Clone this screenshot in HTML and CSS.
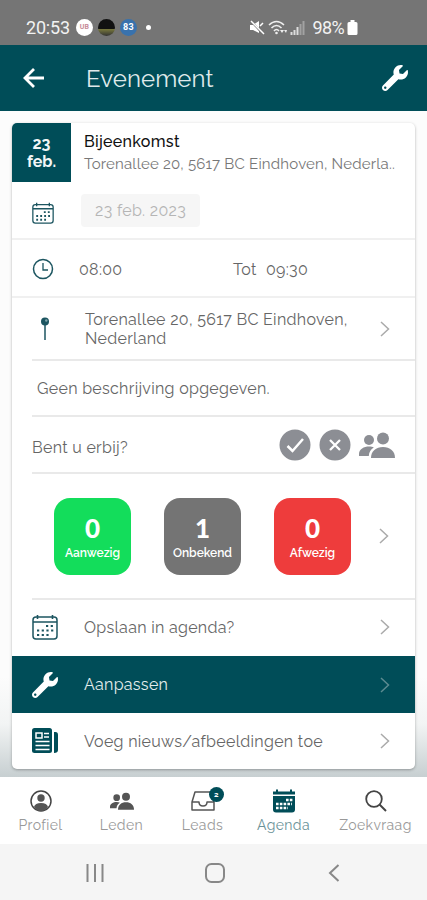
FILE: index.html
```
<!DOCTYPE html>
<html lang="nl">
<head>
    <meta charset="UTF-8">
    <meta name="viewport" content="width=device-width, initial-scale=1.0">
    <title>Evenement</title>
    <link rel="stylesheet" href="styles.css">
</head>
<body>
    <svg class="sprite">
        <symbol id="wrench" viewBox="0 0 512 512">
            <path fill="currentColor" d="M507.73 109.1c-2.24-9.03-13.54-12.09-20.12-5.51l-74.36 74.36-67.88-11.31-11.31-67.88 74.36-74.36c6.62-6.62 3.43-17.9-5.66-20.16-47.38-11.74-99.55.91-136.58 37.93-39.64 39.64-50.55 97.1-34.05 147.2L18.74 402.76c-24.99 24.99-24.99 65.51 0 90.5 24.99 24.99 65.51 24.99 90.5 0l213.21-213.21c50.12 16.71 107.47 5.68 147.37-34.22 37.07-37.07 49.7-89.32 37.91-136.73zM64 472c-13.25 0-24-10.75-24-24 0-13.26 10.75-24 24-24s24 10.74 24 24c0 13.25-10.75 24-24 24z"/>
        </symbol>
        <symbol id="calendar" viewBox="0 0 26 26">
            <rect x="1" y="3" width="24" height="22" rx="3" fill="none" stroke="currentColor" stroke-width="1.5"/>
            <path d="M1 8h24M5.500 1v4M20.500 1v4" fill="none" stroke="currentColor" stroke-width="1.6"/>
            <path d="M14 12h8M5 16.500h17M5 21h12" fill="none" stroke="currentColor" stroke-width="2.200" stroke-dasharray="2.200 2.500"/>
        </symbol>
        <symbol id="people" viewBox="0 0 36 26">
            <circle cx="10" cy="8" r="5"/>
            <circle cx="24" cy="6.500" r="6"/>
            <path d="M0 24v-2c0-5 5-7.500 10-7.500 2 0 3.500.4 4.800 1-3 2-4.800 4.500-5 8.500z"/>
            <path d="M12 26c0-7 5-11 12-11s12 4 12 11z"/>
        </symbol>
        <symbol id="chevron" viewBox="0 0 10 16">
            <path d="M1 1l7.500 7L1 15" fill="none" stroke="currentColor" stroke-width="1.500"/>
        </symbol>
    </svg>

    <div class="status-bar">
        <span class="clock">20:53</span>
        <span class="app app-white">UB</span>
        <span class="app app-black"></span>
        <span class="app app-blue">83</span>
        <span class="dot"></span>
        <div class="system">
            <svg width="16" height="15" viewBox="0 0 16 15"><path d="M1 5h3l6-4v12L4 10H1z" fill="#fff"/><path d="M1 0l13 14" stroke="#757575" stroke-width="2"/><path d="M2 1l13 13M11 6l3-3" stroke="#fff" stroke-width="1.500"/></svg>
            <svg width="19" height="15" viewBox="0 0 19 15"><path d="M1 5q7.500-7 15 0M3.500 8q5-5 10 0M6 11q2.500-3 5 0" fill="none" stroke="#eee" stroke-width="1.600"/><path d="M12 10l2 3 2-3zM18 13l-2-3h3z" fill="#eee"/><circle cx="8.500" cy="13" r="1.300" fill="#eee"/></svg>
            <svg width="15" height="14" viewBox="0 0 15 14"><path d="M1.500 14v-3M4.500 14V9M7.500 14V6" stroke="#ddd" stroke-width="2"/><path d="M10.500 14V3M13.500 14V0" stroke="#a2a2a2" stroke-width="2"/></svg>
            <span class="percent">98%</span>
            <svg width="11" height="15" viewBox="0 0 11 15"><path d="M3.500 0h4v2H9q1.500 0 1.500 1.500v10Q10.500 15 9 15H2Q.5 15 .5 13.500v-10Q.5 2 2 2h1.500z" fill="#fff"/></svg>
        </div>
    </div>

    <header>
        <svg class="back" width="22" height="22" viewBox="0 0 22 22"><path d="M21 11H2M11 2l-9 9 9 9" fill="none" stroke="#fff" stroke-width="2.800"/></svg>
        <h1>Evenement</h1>
        <svg class="edit" width="26" height="26"><use href="#wrench"/></svg>
    </header>

    <main>
        <div class="card">
            <div class="row title-row">
                <div class="badge">23<br>feb.</div>
                <div class="title">
                    <h2>Bijeenkomst</h2>
                    <p>Torenallee 20, 5617 BC Eindhoven, Nederla..</p>
                </div>
            </div>
            <div class="row date-row">
                <svg class="icon" width="22" height="22"><use href="#calendar"/></svg>
                <span class="date">23 feb. 2023</span>
            </div>
            <div class="row time-row">
                <svg class="icon" width="22" height="22" viewBox="0 0 22 22"><circle cx="11" cy="11" r="9.500" fill="none" stroke="currentColor" stroke-width="1.500"/><path d="M11 5v7h5" fill="none" stroke="currentColor" stroke-width="1.300"/></svg>
                <span class="from">08:00</span>
                <span class="until">Tot</span>
                <span>09:30</span>
            </div>
            <div class="row address-row">
                <svg class="icon pin" width="10" height="24" viewBox="0 0 10 24"><circle cx="5" cy="4.500" r="4"/><path d="M5 8v15" stroke="currentColor" stroke-width="1.500"/><circle cx="6.300" cy="3.500" r="1.200" fill="#7fa5ab"/></svg>
                <span class="address">Torenallee 20, 5617 BC Eindhoven,<br>Nederland</span>
                <svg class="chevron"><use href="#chevron"/></svg>
            </div>
            <div class="row inset description">Geen beschrijving opgegeven.</div>
            <div class="row inset attend">
                <span>Bent u erbij?</span>
                <svg width="32" height="32" viewBox="0 0 32 32"><circle cx="16" cy="16" r="15.500"/><path d="M8.500 17l5 5L24 10" fill="none" stroke="#fff" stroke-width="2.500"/></svg>
                <svg width="32" height="32" viewBox="0 0 32 32"><circle cx="16" cy="16" r="15.500"/><path d="M11 11l10 10M21 11L11 21" stroke="#fff" stroke-width="2.300"/></svg>
                <svg width="36" height="26"><use href="#people"/></svg>
            </div>
            <div class="row inset counts">
                <div class="count green"><b>0</b>Aanwezig</div>
                <div class="count gray"><b>1</b>Onbekend</div>
                <div class="count red"><b>0</b>Afwezig</div>
                <svg class="chevron"><use href="#chevron"/></svg>
            </div>
            <div class="row link save">
                <svg class="icon" width="26" height="26"><use href="#calendar"/></svg>
                <span>Opslaan in agenda?</span>
                <svg class="chevron"><use href="#chevron"/></svg>
            </div>
            <div class="row link active">
                <svg class="icon" width="26" height="26"><use href="#wrench"/></svg>
                <span>Aanpassen</span>
                <svg class="chevron"><use href="#chevron"/></svg>
            </div>
            <div class="row link news">
                <svg class="icon" width="26" height="26" viewBox="0 0 26 26"><rect width="20" height="25" rx="2.500"/><path d="M22 4h1.500Q26 4 26 7v15q0 3-4 3z"/><path d="M4 5h6v5H4zM12 5.500h5M12 9h5M3.500 13.500h14M3.500 17.500h14M3.500 21.500h14" fill="none" stroke="#fff" stroke-width="1.500"/></svg>
                <span>Voeg nieuws/afbeeldingen toe</span>
                <svg class="chevron"><use href="#chevron"/></svg>
            </div>
        </div>
    </main>

    <nav>
        <a class="tab">
            <svg width="22" height="22" viewBox="0 0 22 22"><circle cx="11" cy="11" r="10" fill="none" stroke="#444" stroke-width="1.500"/><circle cx="11" cy="8" r="3.700"/><path d="M4 17q1-4 7-4t7 4q-3 4-7 4t-7-4z"/></svg>
            <span>Profiel</span>
        </a>
        <a class="tab">
            <svg width="24" height="18"><use href="#people"/></svg>
            <span>Leden</span>
        </a>
        <a class="tab">
            <svg width="24" height="20" viewBox="0 0 24 20"><path d="M1 11L4 1h16l3 10v8H1zM1 11h7q0 4 4 4t4-4h7" fill="none" stroke="#555" stroke-width="1.500" stroke-linejoin="round"/></svg>
            <span>Leads</span>
            <i>2</i>
        </a>
        <a class="tab current">
            <svg width="24" height="23" viewBox="0 0 24 23"><path d="M1 2h3V0h2v2h12V0h2v2h3v3H1zM1 6.500h22V20q0 3-3 3H4q-3 0-3-3z"/><path d="M14 10.500h7M4 14.500h16M4 18.500h12" stroke="#fff" stroke-width="2.300" stroke-dasharray="2.600 1.200"/></svg>
            <span>Agenda</span>
        </a>
        <a class="tab">
            <svg width="22" height="22" viewBox="0 0 22 22"><circle cx="9" cy="9" r="7.800" fill="none" stroke="#444" stroke-width="1.800"/><path d="M14.500 14.500l6.500 6.500" stroke="#444" stroke-width="2"/></svg>
            <span>Zoekvraag</span>
        </a>
    </nav>

    <div class="android-bar">
        <svg width="18" height="18" viewBox="0 0 18 18"><path d="M1.500 0v18M9 0v18M16.500 0v18"/></svg>
        <svg class="home" width="20" height="20" viewBox="0 0 20 20"><rect x="1" y="1" width="18" height="18" rx="5.500"/></svg>
        <svg width="12" height="18" viewBox="0 0 12 18"><path d="M10.500 1L2 9l8.500 8"/></svg>
    </div>
</body>
</html>
```
FILE: styles.css
```
* {
    box-sizing: border-box;
}
body {
    margin: 0;
    width: 427px;
    height: 900px;
    display: flex;
    flex-direction: column;
    overflow: hidden;
    font-family: Raleway, Lato, sans-serif;
    font-size: 16px;
    letter-spacing: 0.3px;
    color: #666;
    background-color: #fff;
}
svg {
    display: block;
    flex: none;
    fill: currentColor;
}
h1, h2, p {
    margin: 0;
    font-weight: normal;
}
.sprite {
    display: none;
}
.status-bar {
    flex: none;
    height: 45px;
    padding: 10px 69px 0 26px;
    display: flex;
    align-items: center;
    background-color: #757575;
    color: #f2f2f2;
    font-family: Roboto, sans-serif;
    font-size: 18px;
}
.clock {
    width: 50px;
    letter-spacing: -0.2px;
}
.app {
    width: 17px;
    height: 17px;
    margin-right: 5px;
    border-radius: 50%;
    font-size: 9px;
    font-weight: bold;
    line-height: 17px;
    text-align: center;
}
.app-white {
    background-color: #fff;
    color: #c78b9a;
    font-size: 7px;
}
.app-black {
    background: linear-gradient(#111 60%, #77773c 60%, #333);
}
.app-blue {
    background-color: #3972ad;
    color: #fff;
}
.dot {
    width: 5px;
    height: 5px;
    margin-left: 4px;
    border-radius: 50%;
    background-color: #fff;
}
.system {
    display: flex;
    align-items: center;
    gap: 3px;
    margin-left: auto;
}
.percent {
    margin-left: 4px;
    letter-spacing: -0.6px;
}
header {
    flex: none;
    height: 66px;
    padding: 0 19px 0 23px;
    display: flex;
    align-items: center;
    background-color: #004d58;
    color: #fff;
}
h1 {
    margin-left: 41px;
    font-size: 24px;
    letter-spacing: 0.1px;
    color: #dfe9ea;
}
.edit {
    margin-left: auto;
}
main {
    height: 666px;
    padding: 12px 12px 8px;
    background: linear-gradient(#fcfcfc 85%, #f2f4f4 92%, #c7cfd1);
}
.card {
    width: 403px;
    border-radius: 5px;
    overflow: hidden;
    background-color: #fff;
    box-shadow: 0 1px 3px rgba(0, 0, 0, 0.3);
}
.row {
    display: flex;
    align-items: center;
    position: relative;
}
.icon {
    color: #1c5560;
}
.chevron {
    width: 10px;
    height: 16px;
    margin-left: auto;
    margin-right: 25px;
    color: #aaa;
}
.title-row {
    height: 59px;
}
.badge {
    width: 59px;
    height: 59px;
    padding-top: 12px;
    background-color: #004d58;
    color: #f2f6f6;
    font-weight: bold;
    line-height: 18px;
    text-align: center;
    letter-spacing: 0;
}
.title {
    padding-left: 13px;
    white-space: nowrap;
}
h2 {
    font-size: 16px;
    font-weight: 500;
    line-height: 23px;
    color: #111;
}
.title p {
    font-size: 15px;
    line-height: 23px;
    letter-spacing: 0.2px;
    color: #777;
}
.date-row {
    height: 58px;
    padding-left: 20px;
    border-bottom: 2px solid #f0f0f0;
}
.date-row .icon {
    margin-top: 5px;
}
.date {
    width: 119px;
    height: 33px;
    margin-left: 27px;
    border-radius: 4px;
    background-color: #f6f6f6;
    color: #b5b5b5;
    line-height: 33px;
    text-align: center;
}
.time-row {
    height: 58px;
    padding-left: 20px;
    padding-top: 2px;
    border-bottom: 2px solid #f0f0f0;
}
.from {
    width: 154px;
    margin-left: 25px;
}
.until {
    width: 33px;
}
.address-row {
    height: 61px;
    padding-left: 28px;
}
.address {
    margin-left: 35px;
    line-height: 19px;
    white-space: nowrap;
}
.inset {
    margin-left: 20px;
    border-top: 2px solid #e9e9e9;
}
.description {
    height: 56px;
    padding-left: 5px;
}
.attend {
    height: 57px;
    padding-right: 20px;
    gap: 8px;
    color: #8c8e94;
}
.attend span {
    margin-right: auto;
    padding-top: 6px;
    color: #666;
}
.counts {
    height: 126px;
    padding-left: 22px;
    gap: 33px;
}
.count {
    flex: none;
    width: 77px;
    height: 77px;
    padding-top: 13px;
    border-radius: 16px;
    color: #fff;
    font-size: 12px;
    font-weight: 600;
    letter-spacing: 0;
    text-align: center;
}
.counts .chevron {
    margin-left: -5px;
}
.count b {
    display: block;
    font-family: Lato, sans-serif;
    font-size: 26px;
    line-height: 35px;
}
.green {
    background-color: #13dd5b;
}
.gray {
    background-color: #747474;
}
.red {
    background-color: #ee3c3c;
}
.link {
    height: 57px;
    padding-left: 20px;
}
.link span {
    margin-left: 26px;
}
.save {
    height: 58px;
}
.save::before {
    content: "";
    position: absolute;
    top: 0;
    left: 20px;
    right: 0;
    height: 2px;
    background-color: #e9e9e9;
}
.active {
    background-color: #004d58;
    color: #e5eeee;
}
.active .icon {
    color: #fff;
}
.active .chevron {
    color: #5c8b91;
}
.news {
    height: 56px;
}
.news .icon {
    color: #004d58;
}
nav {
    flex: none;
    height: 67px;
    display: flex;
    background-color: #fff;
}
.tab {
    position: relative;
    width: 81px;
    display: flex;
    flex-direction: column;
    align-items: center;
    color: #555;
}
.tab svg {
    height: 24px;
    margin-top: 12px;
}
.tab span {
    margin-top: 4px;
    font-size: 14px;
    line-height: 17px;
    letter-spacing: 0.4px;
    color: #999;
}
.tab:last-child {
    width: 103px;
}
.tab i {
    position: absolute;
    top: 10px;
    right: 19px;
    width: 15px;
    height: 15px;
    border-radius: 50%;
    background-color: #004d58;
    color: #fff;
    font-size: 8px;
    font-style: normal;
    font-weight: bold;
    line-height: 15px;
    text-align: center;
}
.current {
    color: #004d58;
}
.current span {
    color: #6b9298;
}
.android-bar {
    flex: none;
    height: 56px;
    padding: 2px 87px 0 86px;
    display: flex;
    align-items: center;
    justify-content: space-between;
    background-color: #f5f5f5;
}
.android-bar svg {
    fill: none;
    stroke: #888;
    stroke-width: 2;
}
.android-bar .home {
    margin-right: 3px;
}
```
